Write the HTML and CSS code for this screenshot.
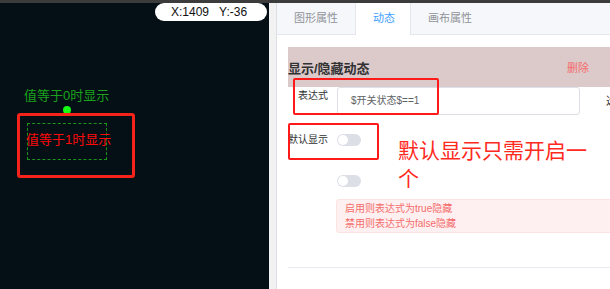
FILE: index.html
```html
<!DOCTYPE html>
<html>
<head>
  <title>动态属性</title>
  <link rel="stylesheet" href="styles.css">
</head>
<body>
  <div class="topbar"></div>
  <div class="app">
    <div class="canvas">
      <div class="coords"><span>X:1409</span><span>Y:-36</span></div>
      <div class="label-zero">值等于0时显示</div>
      <div class="anchor"></div>
      <div class="mark-box"></div>
      <div class="select-box"></div>
      <div class="label-one">值等于1时显示</div>
    </div>
    <div class="gutter"></div>
    <div class="panel">
      <div class="tabs">
        <div class="tab">图形属性</div>
        <div class="tab active">动态</div>
        <div class="tab">画布属性</div>
      </div>
      <div class="panel-body">
        <div class="section-head">
          <span class="section-title">显示/隐藏动态</span>
          <span class="delete">删除</span>
        </div>
        <div class="form-row first">
          <label class="form-label">表达式</label>
          <div class="input">$开关状态$==1</div>
          <span class="side-link">选择</span>
        </div>
        <div class="form-row switch-row">
          <label class="form-label">默认显示</label>
          <span class="switch"></span>
        </div>
        <div class="form-row switch-row second">
          <label class="form-label"></label>
          <span class="switch"></span>
        </div>
        <div class="alert">
          <p>启用则表达式为true隐藏</p>
          <p>禁用则表达式为false隐藏</p>
        </div>
        <div class="divider"></div>
      </div>

      <!-- annotations drawn over the panel -->
      <div class="note-box note-expr"></div>
      <div class="note-box note-default"></div>
      <div class="note-text">默认显示只需开启一个</div>
    </div>
  </div>
</body>
</html>
```

FILE: styles.css
```css
body{
  margin: 0;
  width: 610px;
  height: 289px;
  overflow: hidden;
  background-color: #ffffff;
  font-family: "Liberation Sans", "Noto Sans CJK SC", sans-serif;
}

.topbar{
  height: 3px;
  background-color: #3c3c3c;
}

.app{
  display: flex;
  height: 286px;
}

/* drawing canvas */
.canvas{
  position: relative;
  width: 269px;
  flex-shrink: 0;
  background-color: #040f16;
}

.coords{
  position: absolute;
  left: 155px;
  top: 0;
  width: 112px;
  height: 18px;
  box-sizing: border-box;
  padding-left: 16px;
  display: flex;
  align-items: center;
  gap: 10px;
  background-color: white;
  border-radius: 9px;
  font-size: 12px;
  color: #111;
}

.label-zero,
.label-one{
  position: absolute;
  left: 24px;
  font-size: 13px;
  line-height: 16px;
  white-space: nowrap;
}

.label-zero{
  top: 85px;
  color: #1ba31b;
}

.label-one{
  left: 26px;
  top: 129px;
  color: #ff0a0a;
}

.anchor{
  position: absolute;
  left: 63px;
  top: 103px;
  width: 8px;
  height: 8px;
  border-radius: 50%;
  background-color: #14ff14;
}

.mark-box{
  position: absolute;
  left: 17px;
  top: 110px;
  width: 118px;
  height: 65px;
  box-sizing: border-box;
  border: 3px solid #f5231a;
  border-radius: 3px;
}

.select-box{
  position: absolute;
  left: 27px;
  top: 120px;
  width: 80px;
  height: 37px;
  box-sizing: border-box;
  border: 1px dashed #1c941c;
}

.gutter{
  width: 7px;
  flex-shrink: 0;
  background-color: #f2f2f2;
}

/* property panel */
.panel{
  position: relative;
  width: 380px;
  flex-shrink: 0;
  border-left: 1px solid #dcdfe6;
}

.tabs{
  display: flex;
  height: 32px;
  box-sizing: border-box;
  background-color: #f5f7fa;
  border-bottom: 1px solid #e4e7ed;
}

.tab{
  padding: 0 16px 0 16px;
  line-height: 31px;
  font-size: 11px;
  color: #909399;
  border-left: 1px solid transparent;
  border-right: 1px solid transparent;
}

.tab.active{
  padding: 0 15px 0 17px;
  height: 32px;
  background-color: white;
  color: #409eff;
  border-color: #e4e7ed;
}

.panel-body{
  padding: 12px 0 0 11px;
}

.section-head{
  display: flex;
  align-items: center;
  justify-content: space-between;
  height: 40px;
  padding-right: 68px;
  background-color: #dccaca;
}

.section-title{
  font-size: 13px;
  font-weight: 700;
  color: #303133;
}

.delete{
  font-size: 11px;
  color: #f56c6c;
}

.form-row{
  display: flex;
  align-items: center;
}

.form-row.first{
  align-items: flex-start;
}

.form-label{
  width: 49px;
  flex-shrink: 0;
  box-sizing: border-box;
  padding-right: 9px;
  text-align: right;
  font-size: 10px;
  line-height: 18px;
  color: #303133;
}

.input{
  width: 243px;
  height: 28px;
  box-sizing: border-box;
  padding-left: 13px;
  border: 1px solid #dcdfe6;
  border-radius: 3px;
  font-size: 10px;
  line-height: 26px;
  color: #606266;
}

.side-link{
  margin-left: 26px;
  font-size: 11px;
  line-height: 28px;
  color: #303133;
  white-space: nowrap;
}

.switch-row{
  height: 20px;
  margin-top: 15px;
}

.switch-row.second{
  margin-top: 21px;
}

.switch{
  position: relative;
  width: 24px;
  height: 12px;
  border-radius: 6px;
  background-color: #dcdfe6;
}

.switch::after{
  content: "";
  position: absolute;
  left: 1px;
  top: 1px;
  width: 10px;
  height: 10px;
  border-radius: 50%;
  background-color: white;
}

.alert{
  margin: 8px 0 0 48px;
  height: 34px;
  box-sizing: border-box;
  padding: 1px 8px;
  background-color: #fef0f0;
  border: 1px solid #fde2e2;
  border-radius: 3px;
}

.alert p{
  margin: 0;
  font-size: 10px;
  line-height: 15px;
  color: #f56c6c;
}

.divider{
  margin-top: 34px;
  height: 1px;
  background-color: #e8eaef;
}

/* red annotations */
.note-box{
  position: absolute;
  box-sizing: border-box;
  border: 2px solid #ff1a1a;
  border-radius: 2px;
}

.note-expr{
  left: 16px;
  top: 75px;
  width: 146px;
  height: 37px;
}

.note-default{
  left: 11px;
  top: 120px;
  width: 91px;
  height: 37px;
}

.note-text{
  position: absolute;
  left: 121px;
  top: 132px;
  width: 200px;
  font-family: "Noto Sans CJK SC", sans-serif;
  font-size: 21px;
  line-height: 28px;
  color: #ff2a1e;
}
```
